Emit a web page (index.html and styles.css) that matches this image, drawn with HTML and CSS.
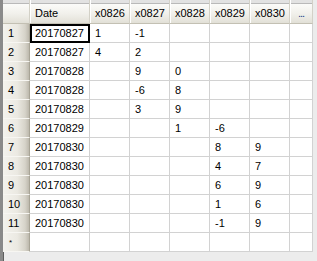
FILE: index.html
```html
<!DOCTYPE html>
<html>
<head>
<meta charset="utf-8">
<link rel="stylesheet" href="styles.css">
</head>
<body>
<div class="frame">
<table class="grid">
<colgroup>
<col class="c-rh"><col class="c-date"><col class="c-num"><col class="c-num"><col class="c-num"><col class="c-num"><col class="c-num"><col class="c-more">
</colgroup>
<thead>
<tr>
<th class="corner"></th><th>Date</th><th>x0826</th><th>x0827</th><th>x0828</th><th>x0829</th><th>x0830</th><th class="more">...</th>
</tr>
</thead>
<tbody>
<tr><th class="rh">1</th><td class="focus">20170827</td><td>1</td><td>-1</td><td></td><td></td><td></td><td></td></tr>
<tr><th class="rh">2</th><td>20170827</td><td>4</td><td>2</td><td></td><td></td><td></td><td></td></tr>
<tr><th class="rh">3</th><td>20170828</td><td></td><td>9</td><td>0</td><td></td><td></td><td></td></tr>
<tr><th class="rh">4</th><td>20170828</td><td></td><td>-6</td><td>8</td><td></td><td></td><td></td></tr>
<tr><th class="rh">5</th><td>20170828</td><td></td><td>3</td><td>9</td><td></td><td></td><td></td></tr>
<tr><th class="rh">6</th><td>20170829</td><td></td><td></td><td>1</td><td>-6</td><td></td><td></td></tr>
<tr><th class="rh">7</th><td>20170830</td><td></td><td></td><td></td><td>8</td><td>9</td><td></td></tr>
<tr><th class="rh">8</th><td>20170830</td><td></td><td></td><td></td><td>4</td><td>7</td><td></td></tr>
<tr><th class="rh">9</th><td>20170830</td><td></td><td></td><td></td><td>6</td><td>9</td><td></td></tr>
<tr><th class="rh">10</th><td>20170830</td><td></td><td></td><td></td><td>1</td><td>6</td><td></td></tr>
<tr><th class="rh">11</th><td>20170830</td><td></td><td></td><td></td><td>-1</td><td>9</td><td></td></tr>
<tr><th class="rh newrow">*</th><td></td><td></td><td></td><td></td><td></td><td></td><td></td></tr>
</tbody>
</table>
</div>
</body>
</html>
```
FILE: styles.css
```css
html, body {
  margin: 0;
  padding: 0;
}
body {
  background: #ececec;
  width: 317px;
  height: 261px;
  overflow: hidden;
  font-family: "Liberation Sans", Arial, sans-serif;
  font-size: 11px;
  color: #000;
}
.frame {
  height: 261px;
  width: 310px;
  border-left: 3px solid #8a8a8a;
  box-shadow: inset 1px 0 0 #5e5e5e;
}
.grid {
  border-collapse: separate;
  border-spacing: 0;
  table-layout: fixed;
  width: 310px;
}
.c-rh { width: 27px; }
.c-date { width: 60px; }
.c-num { width: 40px; }
.c-more { width: 23px; }

.grid th, .grid td {
  box-sizing: border-box;
  padding: 0 0 0 5px;
  white-space: nowrap;
  overflow: hidden;
  text-align: left;
  font-weight: normal;
}
.grid thead th {
  height: 24px;
  padding-top: 3px;
  background: linear-gradient(to bottom, #e2e2e2 0, #e2e2e2 3px, #b9b9b9 3px, #b9b9b9 4px, #fbfbf9 4px, #f1f0eb 60%, #e2e0d7 100%);
  border-right: 1px solid #d3d1c7;
  border-bottom: 1px solid #c3c0b3;
  box-shadow: inset 1px 0 0 #ffffff;
}
.grid thead th.corner {
  box-shadow: none;
}
.grid thead th.more {
  text-align: center;
  padding: 3px 0 0 0;
  letter-spacing: -1px;
  color: #1a3f8a;
}
.grid td {
  height: 19px;
  background: #fff;
  border-right: 1px solid #d2d2d2;
  border-bottom: 1px solid #d2d2d2;
}
.grid th.rh {
  height: 19px;
  background: linear-gradient(to right, #f4f3ee 0%, #ebe9e2 55%, #d6d3c9 85%, #bdb9ad 100%);
  border-right: 1px solid #a8a496;
  border-bottom: 1px solid #f7f6f2;
}
.grid th.newrow {
  font-size: 8px;
  vertical-align: top;
  padding-top: 5px;
  padding-left: 6px;
}
.grid td.focus {
  outline: 2px solid #000;
  outline-offset: -2px;
}
```
